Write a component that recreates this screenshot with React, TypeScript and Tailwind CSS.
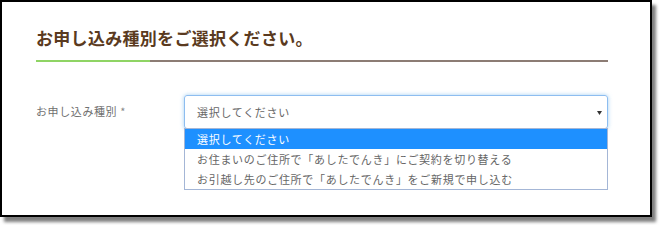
import React from "react";

const options = [
  "選択してください",
  "お住まいのご住所で「あしたでんき」にご契約を切り替える",
  "お引越し先のご住所で「あしたでんき」をご新規で申し込む",
];

export default function App() {
  return (
    <div className="w-[660px] h-[225px] bg-white" style={{ fontFamily: '"Noto Sans CJK JP", "Noto Sans", sans-serif' }}>
      <div className="w-[652px] h-[217px] border-2 border-black bg-white shadow-[4px_5px_3px_rgba(0,0,0,0.5)] pl-[34px] pt-[24px]">
        <h1 className="text-[17px] leading-[24px] font-bold text-[#5a3a20] tracking-[0.3px]">
          お申し込み種別をご選択ください。
        </h1>
        <div className="mt-[10px] flex w-[572px] h-[2px]">
          <div className="w-[114px] bg-[#8fd464]" />
          <div className="flex-1 bg-[#8c7c74]" />
        </div>

        <div className="mt-[33px] flex">
          <div className="w-[148px] pt-[7px] text-[11px] tracking-[0.6px] leading-[18px] text-[#707070]">
            お申し込み種別 <span className="text-[#888]">*</span>
          </div>
          <div className="relative w-[424px]">
            <div className="h-[34px] flex items-center justify-between rounded-[3px] border border-[#8dbdf0] shadow-[0_0_4px_rgba(102,175,233,0.6)] pl-[12px] pr-[5px] text-[11px] tracking-[0.7px] text-[#666]">
              <span>選択してください</span>
              <svg width="5" height="4" viewBox="0 0 5 4" className="mt-[1px]">
                <path d="M0 0 H5 L2.5 4 Z" fill="#333" />
              </svg>
            </div>
            <ul className="absolute left-0 top-[33px] w-[424px] border border-[#a4b6d6] bg-white text-[11px] tracking-[0.7px] leading-[20px]">
              {options.map((o, i) => (
                <li
                  key={o}
                  className={i === 0 ? "h-[20px] pl-[12px] bg-[#1e90ff] text-white" : "h-[20px] pl-[12px] text-[#666]"}
                >
                  {o}
                </li>
              ))}
            </ul>
          </div>
        </div>
      </div>
    </div>
  );
}
